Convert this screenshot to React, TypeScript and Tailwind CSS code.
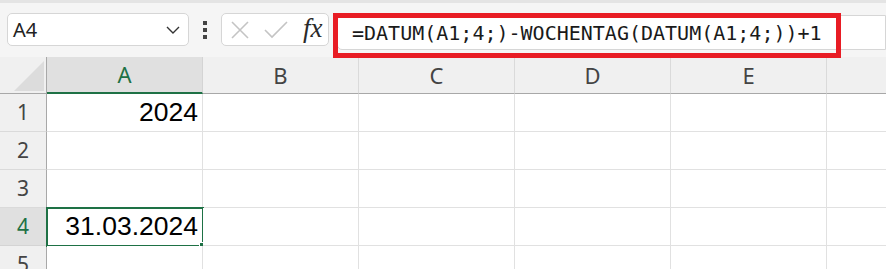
const cols = ["A", "B", "C", "D", "E", "F"];
const rows = [1, 2, 3, 4, 5];

const cellText: Record<string, string> = {
    "A1": "2024",
    "A4": "31.03.2024",
};

function Toolbar() {
    return (
        <div className="relative h-[54px] bg-[#f5f5f5] flex items-start pt-[10px] pl-[7px]">
            {/* name box */}
            <div className="w-[182px] shrink-0 h-[33px] bg-white border border-[#d6d6d6] rounded-[5px] flex items-center justify-between pl-[5px] pr-[8px]">
                <span className="text-[20px] text-[#222] font-['Noto_Sans',sans-serif]">A4</span>
                <svg width="14" height="8" viewBox="0 0 14 8" fill="none" stroke="#333" strokeWidth="1.4">
                    <path d="M1 1 L7 7 L13 1" />
                </svg>
            </div>
            {/* dots */}
            <div className="w-[32px] shrink-0 h-[33px] flex flex-col items-center justify-center gap-[3px]">
                <span className="w-[4px] h-[4px] bg-[#444]" />
                <span className="w-[4px] h-[4px] bg-[#444]" />
                <span className="w-[4px] h-[4px] bg-[#444]" />
            </div>
            {/* cancel / enter / fx */}
            <div className="w-[108px] shrink-0 h-[33px] bg-white border border-[#d6d6d6] rounded-[5px] flex items-center pl-[9px]">
                <svg width="18" height="18" viewBox="0 0 18 18" fill="none" stroke="#c4c4c4" strokeWidth="1.6">
                    <path d="M1 1 L17 17 M17 1 L1 17" />
                </svg>
                <svg className="ml-[15px]" width="24" height="18" viewBox="0 0 24 18" fill="none" stroke="#c4c4c4" strokeWidth="1.6">
                    <path d="M1 9 L8 16 L23 1" />
                </svg>
                <span className="ml-[15px] text-[27px] italic text-[#2a2a2a] font-['Liberation_Serif',serif] leading-none -mt-[3px]">fx</span>
            </div>
            {/* formula input */}
            <div className="ml-[8px] flex-1 h-[35px] mt-[2px] bg-white border border-[#d6d6d6] rounded-l-[5px] flex items-center pl-[14px]">
                <span className="text-[20px] text-[#1a1a1a] font-['DejaVu_Sans_Mono',monospace] whitespace-nowrap">
                    =DATUM(A1;4;)-WOCHENTAG(DATUM(A1;4;))+1
                </span>
            </div>
            {/* annotation */}
            <div className="absolute left-[333px] top-[10px] w-[508px] h-[45px] border-[5px] border-[#e81c24]" />
        </div>
    );
}

function Grid() {
    return (
        <div className="flex flex-col font-['Noto_Sans',sans-serif]">
            {/* header row */}
            <div className="flex h-[37px] bg-[#f0f0f0]">
                <div className="w-[47px] shrink-0 h-full border-r border-b border-[#a8a8a8] relative">
                    <div className="absolute left-[14px] top-[4px] w-0 h-0 border-l-[30px] border-l-transparent border-b-[30px] border-b-[#dcdcdc]" />
                </div>
                {cols.map((c) => (
                    <div
                        key={c}
                        className={
                            c === "A"
                                ? "w-[156px] shrink-0 h-full bg-[#e0e0e0] border-r border-[#d4d4d4] border-b-2 border-b-[#1e7145] flex items-center justify-center text-[22px] text-[#1e7145]"
                                : "w-[156px] shrink-0 h-full border-r border-[#dadada] border-b border-b-[#a8a8a8] flex items-center justify-center text-[22px] text-[#444]"
                        }
                    >
                        {c === "F" ? "" : c}
                    </div>
                ))}
            </div>
            {rows.map((r) => (
                <div key={r} className="flex h-[38px]">
                    <div
                        className={
                            r === 4
                                ? "w-[47px] shrink-0 h-full bg-[#e0e0e0] border-r border-[#a8a8a8] border-b border-b-[#d4d4d4] flex items-center justify-center text-[21px] text-[#1e7145]"
                                : "w-[47px] shrink-0 h-full bg-[#f0f0f0] border-r border-[#a8a8a8] border-b border-b-[#dadada] flex items-center justify-center text-[21px] text-[#444]"
                        }
                    >
                        {r}
                    </div>
                    {cols.map((c) => (
                        <div
                            key={c}
                            className="w-[156px] shrink-0 h-full bg-white border-r border-b border-[#e1e1e1] relative flex items-center justify-end pr-[4px] text-[26.5px] text-black font-['Liberation_Sans',Arial,sans-serif]"
                        >
                            {cellText[c + r]}
                            {c === "A" && r === 4 && (
                                <>
                                    <div className="absolute -left-[1px] -top-[1px] w-[158px] h-[40px] border-2 border-[#1e7145]" />
                                    <div className="absolute -right-[4px] -bottom-[4px] w-[7px] h-[7px] bg-[#1e7145] border border-white" />
                                </>
                            )}
                        </div>
                    ))}
                </div>
            ))}
        </div>
    );
}

export default function App() {
    return (
        <main className="w-[886px] h-[269px] overflow-hidden bg-white">
            <div className="h-[3px] bg-[#e4e4e4] shadow-[0_1px_2px_rgba(0,0,0,0.15)]" />
            <Toolbar />
            <Grid />
        </main>
    );
}
